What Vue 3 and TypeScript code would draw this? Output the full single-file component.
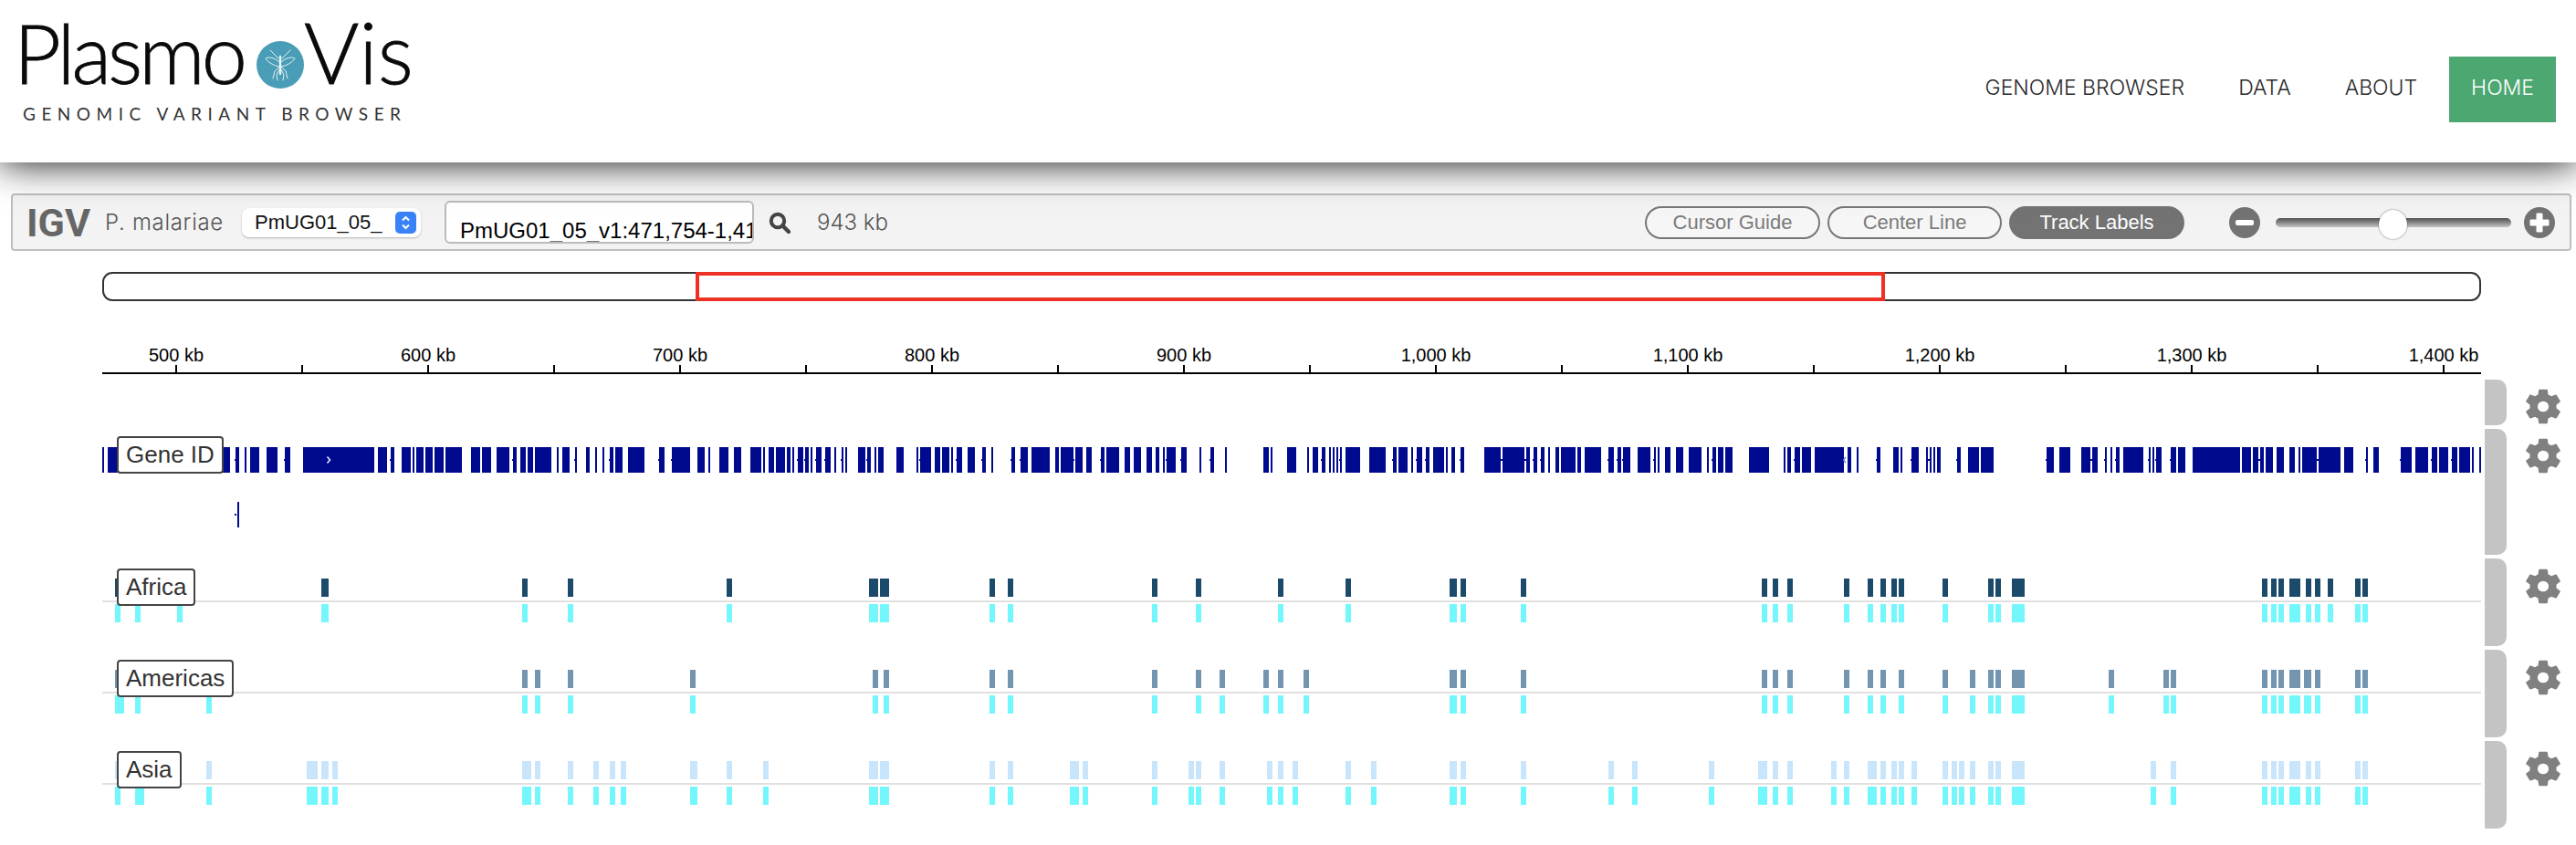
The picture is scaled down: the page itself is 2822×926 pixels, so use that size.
<script setup lang="ts">
type Span = [number, number];

// all x values are page pixels; tracks start at 112
const ORIGIN = 112;
const WIDTH = 2606;

const nav = ["GENOME BROWSER", "DATA", "ABOUT", "HOME"];

const ticks = Array.from({ length: 19 }, (_, i) => 193 + 138 * i);
const rulerLabels = [
  "500 kb", "600 kb", "700 kb", "800 kb", "900 kb",
  "1,000 kb", "1,100 kb", "1,200 kb", "1,300 kb", "1,400 kb",
].map((text, i) => ({ text, x: 193 + 276 * i }));

function spans(flat: number[]): Span[] {
  const out: Span[] = [];
  for (let i = 0; i < flat.length; i += 2) out.push([flat[i], flat[i + 1]]);
  return out;
}

const genes = spans([
  112, 114, 118, 252, 258, 262, 268, 270, 274, 284, 292, 304, 312, 318, 332, 410, 414, 424, 428, 432,
  440, 450, 452, 454, 456, 464, 466, 474, 476, 486, 488, 506, 516, 526, 528, 538, 544, 558, 562, 566,
  570, 576, 578, 584, 586, 604, 610, 612, 616, 624, 630, 632, 642, 646, 652, 654, 660, 662, 668, 672,
  674, 682, 688, 706, 722, 728, 736, 756, 764, 772, 776, 778, 788, 798, 804, 812, 822, 834, 836, 838,
  842, 848, 850, 860, 862, 866, 868, 870, 874, 880, 882, 886, 888, 890, 894, 900, 904, 910, 914, 916,
  922, 924, 926, 928, 940, 948, 950, 954, 958, 960, 962, 968, 982, 990, 1004, 1006, 1008, 1020, 1024, 1030,
  1032, 1040, 1042, 1044, 1048, 1054, 1060, 1068, 1076, 1080, 1086, 1088, 1108, 1112, 1118, 1126, 1130, 1150, 1156, 1160,
  1162, 1176, 1178, 1186, 1190, 1196, 1206, 1210, 1212, 1226, 1232, 1238, 1242, 1250, 1256, 1262, 1266, 1270, 1274, 1276,
  1278, 1288, 1294, 1300, 1314, 1316, 1326, 1330, 1342, 1344, 1384, 1390, 1392, 1394, 1410, 1420, 1432, 1434, 1438, 1444,
  1448, 1452, 1456, 1458, 1460, 1462, 1464, 1466, 1468, 1470, 1474, 1490, 1500, 1518, 1526, 1530, 1532, 1542, 1546, 1548,
  1552, 1558, 1562, 1566, 1570, 1582, 1584, 1586, 1590, 1594, 1600, 1604, 1626, 1644, 1646, 1670, 1672, 1676, 1680, 1684,
  1688, 1692, 1696, 1698, 1704, 1708, 1710, 1726, 1728, 1732, 1736, 1754, 1762, 1768, 1772, 1776, 1778, 1786, 1794, 1808,
  1812, 1814, 1816, 1818, 1824, 1830, 1836, 1844, 1850, 1864, 1870, 1872, 1876, 1880, 1882, 1888, 1890, 1898, 1916, 1938,
  1954, 1956, 1958, 1962, 1966, 1972, 1974, 1984, 1988, 2020, 2024, 2028, 2034, 2036, 2056, 2060, 2074, 2080, 2082, 2084,
  2094, 2102, 2110, 2112, 2114, 2116, 2118, 2120, 2122, 2126, 2144, 2148, 2156, 2168, 2170, 2184, 2242, 2250, 2256, 2268,
  2280, 2290, 2292, 2298, 2306, 2308, 2312, 2314, 2318, 2322, 2326, 2348, 2354, 2356, 2358, 2360, 2362, 2368, 2378, 2384,
  2386, 2394, 2402, 2454, 2456, 2466, 2468, 2474, 2476, 2480, 2482, 2490, 2494, 2502, 2508, 2514, 2518, 2520, 2522, 2538,
  2540, 2564, 2568, 2578, 2592, 2594, 2600, 2606, 2630, 2642, 2646, 2660, 2664, 2670, 2672, 2682, 2686, 2692, 2694, 2706,
  2708, 2710, 2716, 2718,
]);

// little intron stubs sticking out of the gene bars
const stubs = [
  257, 311, 427, 445, 466, 561, 578, 610, 629, 667, 721, 735, 764,
  822, 842, 862, 873, 881, 893, 903, 914, 921, 949, 962, 1007, 1047, 1075, 1086, 1107, 1117, 1175, 1190, 1205,
  1232, 1266, 1277, 1293, 1314, 1325, 1342, 1432, 1447, 1460, 1467, 1525, 1551, 1561,
  1574, 1599, 1644, 1670, 1679, 1687, 1704, 1728, 1761, 1771, 1777, 1811, 1824, 1850, 1875, 1958, 1965, 2055,
  2093, 2112, 2143, 2241, 2290, 2305, 2317, 2353, 2361, 2377, 2474, 2518, 2538, 2591, 2629, 2663, 2685,
];

const africa = spans([
  126, 132, 148, 154, 194, 200, 352, 360, 572, 578, 622, 628, 796, 802, 952, 962, 964, 974, 1084, 1090,
  1104, 1110, 1262, 1268, 1310, 1316, 1400, 1406, 1474, 1480, 1588, 1596, 1600, 1606, 1666, 1672, 1930, 1936, 1942, 1948,
  1958, 1964, 2020, 2026, 2046, 2052, 2060, 2066, 2072, 2078, 2080, 2086, 2128, 2134, 2178, 2184, 2186, 2192, 2204, 2218,
  2478, 2484, 2488, 2494, 2496, 2502, 2508, 2520, 2526, 2532, 2536, 2542, 2550, 2556, 2580, 2586, 2588, 2594,
]);
const americas = spans([
  126, 136, 148, 154, 226, 232, 572, 578, 586, 592, 622, 628, 756, 762, 956, 962, 968, 974, 1084, 1090,
  1104, 1110, 1262, 1268, 1310, 1316, 1336, 1342, 1384, 1390, 1400, 1406, 1428, 1434, 1588, 1596, 1600, 1606, 1666, 1672,
  1930, 1936, 1942, 1948, 1958, 1964, 2020, 2026, 2046, 2052, 2060, 2066, 2080, 2086, 2128, 2134, 2158, 2164, 2178, 2184,
  2186, 2192, 2204, 2218, 2310, 2316, 2370, 2376, 2378, 2384, 2478, 2484, 2488, 2494, 2496, 2502, 2508, 2520, 2524, 2532,
  2536, 2542, 2580, 2586, 2588, 2594,
]);
const asia = spans([
  126, 132, 148, 158, 226, 232, 336, 348, 352, 360, 364, 370, 572, 582, 586, 592, 622, 628, 650, 656,
  668, 674, 680, 686, 756, 764, 796, 802, 836, 842, 952, 962, 964, 974, 1084, 1090, 1104, 1110, 1172, 1182,
  1186, 1192, 1262, 1268, 1302, 1308, 1310, 1316, 1336, 1342, 1388, 1394, 1400, 1406, 1416, 1422, 1474, 1480, 1502, 1508,
  1588, 1596, 1600, 1606, 1666, 1672, 1762, 1768, 1788, 1794, 1872, 1878, 1926, 1936, 1942, 1948, 1958, 1964, 2006, 2012,
  2020, 2026, 2046, 2056, 2060, 2066, 2072, 2078, 2080, 2086, 2094, 2100, 2128, 2134, 2138, 2144, 2146, 2152, 2158, 2164,
  2178, 2184, 2186, 2192, 2204, 2218, 2356, 2362, 2378, 2384, 2478, 2484, 2488, 2494, 2496, 2502, 2508, 2520, 2526, 2532,
  2536, 2542, 2580, 2586, 2588, 2594,
]);

const variantTracks = [
  { name: "Africa", color: "#1c4a6b", bars: africa },
  { name: "Americas", color: "#7395b0", bars: americas },
  { name: "Asia", color: "#c8e5fb", bars: asia },
];

const gearPath =
  "M19.14 12.94c.04-.3.06-.61.06-.94 0-.32-.02-.64-.07-.94l2.03-1.58c.18-.14.23-.41.12-.61l-1.92-3.32c-.12-.22-.37-.29-.59-.22l-2.39.96c-.5-.38-1.03-.7-1.62-.94l-.36-2.54c-.04-.24-.24-.41-.48-.41h-3.84c-.24 0-.43.17-.47.41l-.36 2.54c-.59.24-1.13.57-1.62.94l-2.39-.96c-.22-.08-.47 0-.59.22L2.74 8.87c-.12.21-.08.47.12.61l2.03 1.58c-.05.3-.09.63-.09.94s.02.64.07.94l-2.03 1.58c-.18.14-.23.41-.12.61l1.92 3.32c.12.22.37.29.59.22l2.39-.96c.5.38 1.03.7 1.62.94l.36 2.54c.05.24.24.41.48.41h3.84c.24 0 .44-.17.47-.41l.36-2.54c.59-.24 1.13-.56 1.62-.94l2.39.96c.22.08.47 0 .59-.22l1.92-3.32c.12-.22.07-.47-.12-.61l-2.01-1.58zM12 9a3 3 0 1 0 0 6a3 3 0 1 0 0-6z";
</script>

<template>
  <div class="page">
    <header class="topbar">
      <div class="brand">
        <div class="wordmark">
          <span class="plasmo">Plasmo</span>
          <svg class="bug" viewBox="5 5 52 52" width="52" height="52">
            <circle cx="31" cy="31" r="26" fill="#4a9db6" />
            <g fill="none" stroke="#e4f2f5" stroke-width="1" stroke-linecap="round">
              <path d="M31 22v19" stroke-width="2.4" />
              <path d="M30 28C25 23 18 22 15 24C17 28 24 32 30 33" />
              <path d="M32 28C37 23 44 22 47 24C45 28 38 32 32 33" />
              <path d="M29 24L25 20L20 15" />
              <path d="M33 24L37 20L42 15" />
              <path d="M30 33L25 38L23 46" />
              <path d="M32 33L37 38L39 46" />
              <path d="M30 36L27 42L28 48" />
              <path d="M32 36L35 42L34 48" />
            </g>
          </svg>
          <span>Vis</span>
        </div>
        <div class="tagline">GENOMIC VARIANT BROWSER</div>
      </div>
      <nav class="nav">
        <a v-for="item in nav" :key="item" :class="{ active: item === 'HOME' }">{{ item }}</a>
      </nav>
    </header>

    <div class="toolbar">
      <span class="igv">IGV</span>
      <span class="genome">P. malariae</span>
      <div class="chrom">
        <span>PmUG01_05_</span>
        <span class="stepper">
          <svg viewBox="0 0 23 24" width="23" height="24">
            <path d="M8 9.5l3.5-3.5 3.5 3.5M8 14.5l3.5 3.5 3.5-3.5" fill="none" stroke="#fff" stroke-width="2" />
          </svg>
        </span>
      </div>
      <div class="locus">PmUG01_05_v1:471,754-1,414,897</div>
      <svg class="search" viewBox="0 0 24 24" width="24" height="24">
        <circle cx="10" cy="10" r="7.2" fill="none" stroke="#444" stroke-width="4" />
        <path d="M15.5 15.5L22 22" stroke="#444" stroke-width="4.4" stroke-linecap="round" />
      </svg>
      <span class="span-size">943 kb</span>

      <div class="pills">
        <span class="pill cursor">Cursor Guide</span>
        <span class="pill center">Center Line</span>
        <span class="pill on">Track Labels</span>
      </div>

      <div class="zoom">
        <svg viewBox="0 0 34 34" width="34" height="34">
          <circle cx="17" cy="17" r="17" fill="#737373" />
          <rect x="7" y="14" width="20" height="6" rx="2" fill="#fff" />
        </svg>
        <div class="slider"><span class="thumb"></span></div>
        <svg viewBox="0 0 34 34" width="34" height="34">
          <circle cx="17" cy="17" r="17" fill="#737373" />
          <path d="M14 7h6v7h7v6h-7v7h-6v-7H7v-6h7z" fill="#fff" stroke="#fff" stroke-linejoin="round" />
        </svg>
      </div>
    </div>

    <div class="ideogram"><span class="viewport"></span></div>

    <svg class="ruler" :viewBox="`${ORIGIN} 0 ${WIDTH} 80`" :width="WIDTH" height="80">
      <rect :x="ORIGIN" y="78" :width="WIDTH" height="2" fill="#000" />
      <rect v-for="t in ticks" :key="t" :x="t - 1" y="70" width="2" height="8" fill="#000" />
      <text v-for="l in rulerLabels" :key="l.text" :x="l.x" y="66" text-anchor="middle">{{ l.text }}</text>
    </svg>

    <section class="tracks">
      <div class="row ruler-row">
        <div class="view"></div>
        <span class="grip"></span>
        <svg class="gear" viewBox="2.6 2 18.8 20" width="38" height="39" preserveAspectRatio="none"><path :d="gearPath" fill="#808080" fill-rule="evenodd" /></svg>
      </div>

      <div class="row gene-row">
        <div class="view">
          <svg :viewBox="`${ORIGIN} 0 ${WIDTH} 138`" :width="WIDTH" height="138">
            <rect v-for="g in genes" :key="g[0]" :x="g[0]" y="20" :width="g[1] - g[0]" height="28" fill="#000a8e" />
            <rect v-for="s in stubs" :key="s" :x="s" y="33" width="2" height="2" fill="#000a8e" />
            <path d="M358.5 30.5l3 3.5-3 3.5" fill="none" stroke="#e8e8ff" stroke-width="1.6" />
            <path d="M2022 31l-2.5 3 2.5 3" fill="none" stroke="#7a7fd0" stroke-width="1.4" />
            <rect x="260" y="80" width="2" height="28" fill="#000a8e" />
            <rect x="257" y="93" width="2" height="2" fill="#000a8e" />
          </svg>
          <span class="label gene-label">Gene ID</span>
        </div>
        <span class="grip"></span>
        <svg class="gear" viewBox="2.6 2 18.8 20" width="38" height="39" preserveAspectRatio="none"><path :d="gearPath" fill="#808080" fill-rule="evenodd" /></svg>
      </div>

      <div v-for="t in variantTracks" :key="t.name" class="row variant-row">
        <div class="view">
          <svg :viewBox="`${ORIGIN} 0 ${WIDTH} 96`" :width="WIDTH" height="96">
            <rect :x="ORIGIN" y="46" :width="WIDTH" height="2" fill="#e0e0e0" />
            <rect v-for="b in t.bars" :key="b[0]" :x="b[0]" y="22" :width="b[1] - b[0]" height="20" :fill="t.color" />
            <rect v-for="b in t.bars" :key="`c${b[0]}`" :x="b[0]" y="50" :width="b[1] - b[0]" height="20" fill="#73f7fd" />
          </svg>
          <span class="label">{{ t.name }}</span>
        </div>
        <span class="grip"></span>
        <svg class="gear" viewBox="2.6 2 18.8 20" width="38" height="39" preserveAspectRatio="none"><path :d="gearPath" fill="#808080" fill-rule="evenodd" /></svg>
      </div>
    </section>
  </div>
</template>

<style scoped>
.page {
  height: 926px;
  overflow: hidden;
  background: #fff;
  font-family: "Liberation Sans", Arial, sans-serif;
}

.topbar {
  position: relative;
  z-index: 2;
  height: 178px;
  display: flex;
  justify-content: space-between;
  background: #fff;
  box-shadow: 0 0 40px rgba(0, 0, 0, 0.95);
}
.brand {
  padding: 11px 0 0 15px;
}
.wordmark {
  display: flex;
  align-items: center;
  height: 92px;
  font-family: Lato, sans-serif;
  font-weight: 300;
  font-size: 92px;
  line-height: 92px;
  color: #0a0a0a;
  -webkit-text-stroke: 0.8px #0a0a0a;
}
.plasmo {
  font-size: 90px;
  letter-spacing: -4px;
}
.bug {
  margin: 28px 0 0 14px;
}
.tagline {
  margin: 12px 0 0 10px;
  font-family: Lato, sans-serif;
  font-size: 19px;
  line-height: 20px;
  letter-spacing: 6.5px;
  color: #333;
  white-space: nowrap;
}
.nav {
  display: flex;
  gap: 11px;
  margin: 62px 22px 0 0;
  height: 72px;
}
.nav a {
  padding: 20px 24px 0;
  font-family: Inter, sans-serif;
  font-weight: 300;
  font-size: 23px;
  line-height: 28px;
  color: #2a2a2a;
}
.nav a.active {
  background: #4ca771;
  color: #fff;
}

.toolbar {
  display: flex;
  align-items: center;
  box-sizing: border-box;
  height: 63px;
  margin: 34px 5px 0 12px;
  padding-left: 15px;
  background: #f3f3f3;
  border: 2px solid #bfbfbf;
  border-radius: 4px;
}
.igv {
  width: 70px;
  font-family: Roboto, sans-serif;
  font-weight: 700;
  font-size: 43px;
  line-height: 44px;
  color: #666;
}
.genome {
  margin-left: 16px;
  width: 150px;
  font-family: Inter, sans-serif;
  font-weight: 300;
  font-size: 24px;
  letter-spacing: 0.7px;
  color: #555;
}
.chrom {
  display: flex;
  align-items: center;
  justify-content: space-between;
  box-sizing: border-box;
  width: 196px;
  height: 32px;
  padding: 0 5px 0 14px;
  background: #fff;
  border-radius: 8px;
  box-shadow: 0 1px 2px rgba(0, 0, 0, 0.25);
  font-size: 22px;
  color: #111;
}
.stepper {
  display: flex;
  width: 23px;
  height: 24px;
  background: #3a82f7;
  border-radius: 5px;
}
.locus {
  box-sizing: border-box;
  width: 339px;
  height: 47px;
  margin-left: 26px;
  padding: 19px 0 0 15px;
  overflow: hidden;
  white-space: nowrap;
  background: #fff;
  border: 2px solid #bbb;
  border-radius: 6px;
  font-size: 24px;
  line-height: 24px;
  color: #000;
}
.search {
  margin-left: 16px;
}
.span-size {
  margin-left: 29px;
  font-family: Inter, sans-serif;
  font-weight: 300;
  font-size: 24px;
  color: #555;
}

.pills {
  display: flex;
  gap: 8px;
  margin-left: auto;
}
.pill {
  box-sizing: border-box;
  height: 36px;
  border: 2px solid #777;
  border-radius: 18px;
  text-align: center;
  font-size: 22px;
  line-height: 32px;
  color: #7b7b7b;
  background: #f6f6f6;
}
.pill.cursor {
  width: 192px;
}
.pill.center {
  width: 191px;
}
.pill.on {
  width: 192px;
  background: #737373;
  border-color: #737373;
  color: #fff;
}
.zoom {
  display: flex;
  align-items: center;
  margin: 0 16px 0 49px;
}
.slider {
  position: relative;
  width: 258px;
  height: 10px;
  margin: 0 14px 0 17px;
  border-radius: 5px;
  background: linear-gradient(#505050, #c4c4c4);
}
.thumb {
  position: absolute;
  left: 113px;
  top: -9px;
  width: 31px;
  height: 32px;
  background: #fff;
  border-radius: 50%;
  box-shadow: 0 0 2px rgba(0, 0, 0, 0.6);
}

.ideogram {
  position: relative;
  box-sizing: border-box;
  width: 2606px;
  height: 32px;
  margin: 23px 0 0 112px;
  border: 2px solid #333;
  border-radius: 11px;
}
.viewport {
  position: absolute;
  left: 648px;
  top: -2px;
  width: 1303px;
  height: 32px;
  box-sizing: border-box;
  border: 4px solid #ee3124;
}

.ruler {
  display: block;
  margin: 0 0 0 112px;
  font-size: 20px;
  fill: #000;
}

.tracks {
  display: flex;
  flex-direction: column;
  gap: 4px;
  margin-top: 6px;
  padding-left: 112px;
}
.row {
  display: flex;
  align-items: flex-start;
}
.ruler-row {
  height: 50px;
}
.gene-row {
  height: 138px;
}
.variant-row {
  height: 96px;
}
.view {
  position: relative;
  flex: none;
  width: 2606px;
  height: 100%;
}
.view svg {
  display: block;
}
.grip {
  flex: none;
  width: 24px;
  height: 100%;
  margin-left: 4px;
  background: #c4c4c4;
  border-radius: 0 10px 10px 0;
}
.gear {
  flex: none;
  margin: 10px 0 0 21px;
}
.variant-row .gear {
  margin-top: 11px;
}
.label {
  position: absolute;
  left: 16px;
  top: 11px;
  box-sizing: border-box;
  height: 41px;
  padding: 0 8px;
  background: #fff;
  border: 2px solid #444;
  border-radius: 4px;
  font-size: 26px;
  line-height: 37px;
  color: #333;
}
.gene-label {
  top: 8px;
}
</style>
